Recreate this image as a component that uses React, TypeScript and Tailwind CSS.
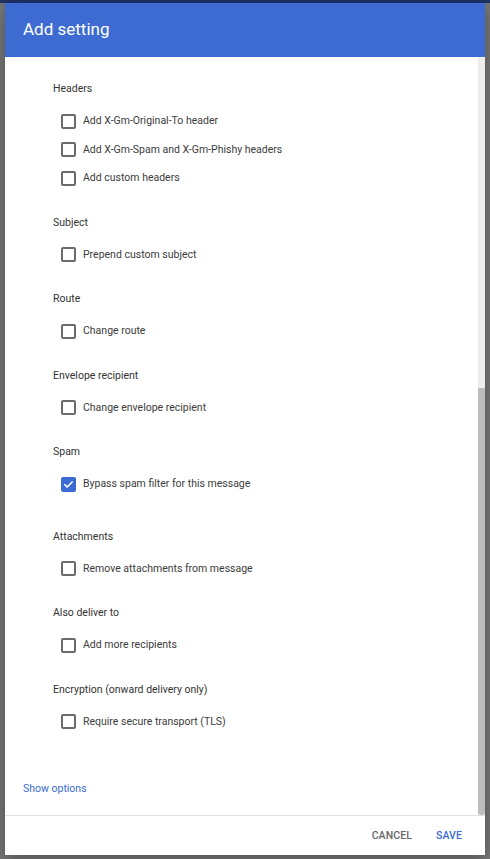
import type { ReactNode } from "react";

type Option = { label: string; checked?: boolean };
type Group = { title: string; options: Option[] };

const groups: Group[] = [
  {
    title: "Headers",
    options: [
      { label: "Add X-Gm-Original-To header" },
      { label: "Add X-Gm-Spam and X-Gm-Phishy headers" },
      { label: "Add custom headers" },
    ],
  },
  { title: "Subject", options: [{ label: "Prepend custom subject" }] },
  { title: "Route", options: [{ label: "Change route" }] },
  { title: "Envelope recipient", options: [{ label: "Change envelope recipient" }] },
  { title: "Spam", options: [{ label: "Bypass spam filter for this message", checked: true }] },
  { title: "Attachments", options: [{ label: "Remove attachments from message" }] },
  { title: "Also deliver to", options: [{ label: "Add more recipients" }] },
  { title: "Encryption (onward delivery only)", options: [{ label: "Require secure transport (TLS)" }] },
];

function Box({ checked }: { checked?: boolean }) {
  if (checked) {
    return (
      <span className="flex h-[15px] w-[15px] shrink-0 items-center justify-center rounded-[2px] bg-[#3b6bd3]">
        <svg width="11" height="11" viewBox="0 0 24 24" fill="none" stroke="white" strokeWidth="3.6" strokeLinecap="round" strokeLinejoin="round">
          <path d="M4 12.5l5 5L20 6.5" />
        </svg>
      </span>
    );
  }
  return <span className="h-[15px] w-[15px] shrink-0 rounded-[2px] border-2 border-[#6b6b6b]" />;
}

function Row({ children, checked }: { children: ReactNode; checked?: boolean }) {
  return (
    <label className="flex h-[28.5px] items-center gap-[7px] pl-[8px] text-[10.5px] text-[#3c3c3c]">
      <Box checked={checked} />
      <span>{children}</span>
    </label>
  );
}

export default function App() {
  return (
    <div className="flex h-[859px] w-[490px] flex-col overflow-hidden bg-[#787878] font-['Roboto','Liberation_Sans',sans-serif]">
      <div className="h-[3px] shrink-0 bg-[#1f3368]" />
      <div className="mx-[5px] flex h-[852px] flex-col bg-white shadow-[0_4px_16px_rgba(0,0,0,0.35)]">
        <div className="flex h-[54px] shrink-0 items-center bg-[#3d6bd1] px-[18px] pb-[1px] text-[17px] text-white">
          Add setting
        </div>
        <div className="flex min-h-0 flex-1">
          <div className="flex-1 pl-[48px] pt-[24px]">
            {groups.map((g, i) => (
              <section key={g.title} className={i === 0 ? "" : i === 5 ? "mt-[30px]" : "mt-[22px]"}>
                <h3 className="flex h-[16px] items-center text-[10.5px] text-[#333]">{g.title}</h3>
                <div className="mt-[10px]">
                  {g.options.map((o) => (
                    <Row key={o.label} checked={o.checked}>
                      {o.label}
                    </Row>
                  ))}
                </div>
              </section>
            ))}
            <div className="-ml-[30px] mt-[45px] flex h-[16px] items-center text-[10.5px] text-[#3b6bd3]">
              Show options
            </div>
          </div>
          <div className="flex w-[7px] shrink-0 flex-col bg-[#ededed]">
            <div className="mt-[331px] flex-1 rounded-b-[3px] bg-[#bdbdbd]" />
          </div>
        </div>
        <div className="flex h-[40px] shrink-0 items-center justify-end gap-[24px] border-t border-[#e0e0e0] pr-[23px] text-[10.5px] font-medium tracking-[0.1px]">
          <button type="button" className="text-[#666]">CANCEL</button>
          <button type="button" className="text-[#3b6bd3]">SAVE</button>
        </div>
      </div>
    </div>
  );
}
